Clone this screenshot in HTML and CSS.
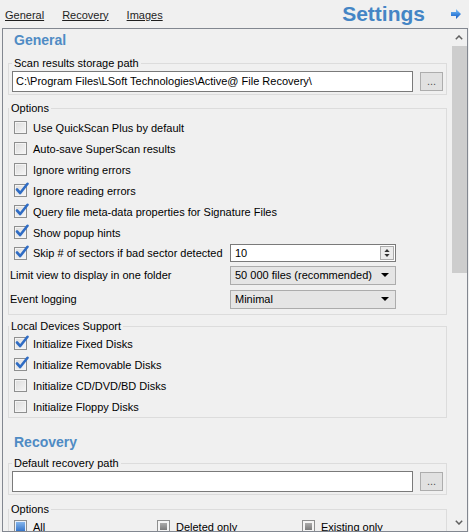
FILE: index.html
```html
<!DOCTYPE html>
<html lang="en">
<head>
  <meta charset="UTF-8" />
  <title>Settings</title>
  <link rel="stylesheet" href="styles.css">
</head>
<body>

  <div class="topbar">
    <nav class="tabs">
      <a href="#general">General</a>
      <a href="#recovery">Recovery</a>
      <a href="#images">Images</a>
    </nav>
    <div class="title">Settings</div>
    <svg class="next" viewBox="0 0 10 10">
      <defs>
        <linearGradient id="arrowFill" x1="0" y1="0" x2="0" y2="1">
          <stop offset="0" stop-color="#8cc4f4"/>
          <stop offset="0.5" stop-color="#3d8ae0"/>
          <stop offset="1" stop-color="#1c5cc0"/>
        </linearGradient>
      </defs>
      <polygon points="0,3 5,3 5,0 10,5 5,10 5,7 0,7" fill="url(#arrowFill)"/>
    </svg>
  </div>

  <div class="panel">
    <div class="content">

      <h2 class="section">General</h2>

      <fieldset class="group">
        <legend>Scan results storage path</legend>
        <div class="path-row">
          <div class="textbox">C:\Program Files\LSoft Technologies\Active@ File Recovery\</div>
          <button class="browse" type="button">...</button>
        </div>
      </fieldset>

      <fieldset class="group options">
        <legend>Options</legend>
        <div class="check"><span class="cb"></span>Use QuickScan Plus by default</div>
        <div class="check"><span class="cb"></span>Auto-save SuperScan results</div>
        <div class="check"><span class="cb"></span>Ignore writing errors</div>
        <div class="check"><span class="cb on"><svg viewBox="0 0 14 14"><path d="M2 7.5 L5.2 11 L12.5 1.8"/></svg></span>Ignore reading errors</div>
        <div class="check"><span class="cb on"><svg viewBox="0 0 14 14"><path d="M2 7.5 L5.2 11 L12.5 1.8"/></svg></span>Query file meta-data properties for Signature Files</div>
        <div class="check"><span class="cb on"><svg viewBox="0 0 14 14"><path d="M2 7.5 L5.2 11 L12.5 1.8"/></svg></span>Show popup hints</div>
        <div class="field skip">
          <div class="check"><span class="cb on"><svg viewBox="0 0 14 14"><path d="M2 7.5 L5.2 11 L12.5 1.8"/></svg></span>Skip # of sectors if bad sector detected</div>
          <div class="spin">
            <span>10</span>
            <span class="spin-btns">
              <svg viewBox="0 0 7 4"><polygon points="0,4 3.5,0 7,4"/></svg>
              <svg viewBox="0 0 7 4"><polygon points="0,0 3.5,4 7,0"/></svg>
            </span>
          </div>
        </div>
        <div class="field">
          <label>Limit view to display in one folder</label>
          <div class="select">50 000 files (recommended)<svg viewBox="0 0 8 4"><polygon points="0,0 8,0 4,4"/></svg></div>
        </div>
        <div class="field">
          <label>Event logging</label>
          <div class="select">Minimal<svg viewBox="0 0 8 4"><polygon points="0,0 8,0 4,4"/></svg></div>
        </div>
      </fieldset>

      <fieldset class="group devices">
        <legend>Local Devices Support</legend>
        <div class="check"><span class="cb on"><svg viewBox="0 0 14 14"><path d="M2 7.5 L5.2 11 L12.5 1.8"/></svg></span>Initialize Fixed Disks</div>
        <div class="check"><span class="cb on"><svg viewBox="0 0 14 14"><path d="M2 7.5 L5.2 11 L12.5 1.8"/></svg></span>Initialize Removable Disks</div>
        <div class="check"><span class="cb"></span>Initialize CD/DVD/BD Disks</div>
        <div class="check"><span class="cb"></span>Initialize Floppy Disks</div>
      </fieldset>

      <h2 class="section recovery">Recovery</h2>

      <fieldset class="group path">
        <legend>Default recovery path</legend>
        <div class="path-row">
          <div class="textbox"></div>
          <button class="browse" type="button">...</button>
        </div>
      </fieldset>

      <fieldset class="group rec-options">
        <legend>Options</legend>
        <div class="choice-row">
          <div class="check"><span class="cb full"></span>All</div>
          <div class="check"><span class="cb part"></span>Deleted only</div>
          <div class="check"><span class="cb part"></span>Existing only</div>
        </div>
      </fieldset>

    </div>

    <div class="scrollbar">
      <div class="sb-btn"><svg viewBox="0 0 8 5"><path d="M0.8 4.2 L4 1 L7.2 4.2"/></svg></div>
      <div class="sb-thumb"></div>
      <div class="sb-track"></div>
      <div class="sb-btn"><svg viewBox="0 0 8 5"><path d="M0.8 0.8 L4 4 L7.2 0.8"/></svg></div>
    </div>
  </div>

</body>
</html>
```

FILE: styles.css
```css
* {
  margin: 0;
  padding: 0;
  box-sizing: border-box;
}

body {
  font-family: "Liberation Sans", Arial, sans-serif;
  font-size: 11px;
  color: #000;
  background: #f0f0f0;
  width: 469px;
  height: 532px;
  overflow: hidden;
}

/* top bar */

.topbar {
  display: flex;
  align-items: center;
  height: 28px;
  padding: 0 8px 0 5px;
}

.tabs {
  display: flex;
  gap: 18px;
  padding-top: 1px;
}

.tabs a {
  color: #1e1e1e;
  text-decoration: underline;
}

.title {
  margin-left: auto;
  font-size: 21px;
  font-weight: bold;
  color: #4485c5;
}

.next {
  width: 10px;
  height: 10px;
  margin-left: 26px;
}

/* panel */

.panel {
  display: flex;
  height: 504px;
  margin: 0 1px 0 2px;
  border: 1px solid #828790;
}

.content {
  flex: 1;
  overflow: hidden;
}

.section {
  font-size: 14px;
  font-weight: bold;
  line-height: 18px;
  color: #4f8bc4;
  margin: 2px 0 0 11px;
}

.section.recovery {
  margin-top: 15px;
}

.group {
  margin: 7px 4px 0 5px;
  border: 1px solid #dcdcdc;
  padding: 1px 3px 2px;
}

.group.path {
  margin-top: 5px;
}

.group legend {
  line-height: 14px;
  padding: 0 2px;
}

.path-row {
  display: flex;
  align-items: center;
}

.textbox {
  flex: 1;
  height: 21px;
  line-height: 19px;
  padding: 0 3px;
  background: #fff;
  border: 1px solid #7a7a7a;
  white-space: nowrap;
  overflow: hidden;
}

.browse {
  width: 23px;
  height: 19px;
  margin-left: 7px;
  background: #e1e1e1;
  border: 1px solid #adadad;
  color: #555;
  font-family: inherit;
  font-size: 11px;
  line-height: 15px;
}

/* options */

.options {
  margin-top: 6px;
  padding: 2px 0 3px;
}

.devices {
  margin-top: 4px;
  padding: 0;
}

.rec-options {
  margin-top: 7px;
  padding: 0;
}

.check {
  display: flex;
  align-items: center;
  gap: 6px;
  height: 21px;
  padding-left: 5px;
  white-space: nowrap;
}

.cb {
  position: relative;
  width: 13px;
  height: 13px;
  flex: none;
  border: 1px solid #8e8f8f;
  background: linear-gradient(135deg, #dcdcdc, #f6f6f6);
  box-shadow: inset 0 0 0 1px #f4f4f4;
}

.cb svg {
  position: absolute;
  left: 0;
  top: -3px;
  width: 14px;
  height: 14px;
}

.cb svg path {
  fill: none;
  stroke: #2f6cc4;
  stroke-width: 2.6;
  stroke-linecap: round;
  stroke-linejoin: round;
}

.cb.full {
  background: linear-gradient(#8cbcf0, #2f6fc6);
  box-shadow: inset 0 0 0 1px #e8f0fa;
}

.cb.part {
  background: linear-gradient(#b8b8b8, #6e6e6e);
  box-shadow: inset 0 0 0 2px #f4f4f4;
}

.field {
  display: flex;
  align-items: center;
  height: 24px;
}

.field label {
  width: 221px;
  padding-left: 1px;
}

.field.skip {
  height: 20px;
}

.field.skip .check {
  width: 221px;
}

.spin {
  display: flex;
  align-items: center;
  width: 166px;
  height: 18px;
  padding-left: 4px;
  background: #fff;
  border: 1px solid #7a7a7a;
}

.spin span:first-child {
  flex: 1;
}

.spin-btns {
  display: flex;
  flex-direction: column;
  justify-content: space-evenly;
  align-items: center;
  width: 14px;
  height: 14px;
  margin-right: 1px;
  background: #ececec;
  border: 1px solid #acacac;
}

.spin-btns svg {
  width: 6px;
  height: 3px;
  fill: #333;
}

.select {
  display: flex;
  align-items: center;
  justify-content: space-between;
  width: 166px;
  height: 19px;
  padding: 0 6px 0 4px;
  background: #e5e5e5;
  border: 1px solid #acacac;
}

.select svg {
  width: 8px;
  height: 4px;
  fill: #000;
}

.choice-row {
  display: grid;
  grid-template-columns: 148px 145px 1fr;
}

.choice-row .check + .check {
  padding-left: 0;
}

/* scrollbar */

.scrollbar {
  display: flex;
  flex-direction: column;
  width: 16px;
  background: #f0f0f0;
}

.sb-btn {
  display: flex;
  align-items: center;
  justify-content: center;
  height: 17px;
}

.sb-btn svg {
  width: 8px;
  height: 5px;
}

.sb-btn path {
  fill: none;
  stroke: #606060;
  stroke-width: 1.5;
}

.sb-thumb {
  height: 227px;
  margin: 0 0 0 1px;
  background: #cdcdcd;
}

.sb-track {
  flex: 1;
}
```
